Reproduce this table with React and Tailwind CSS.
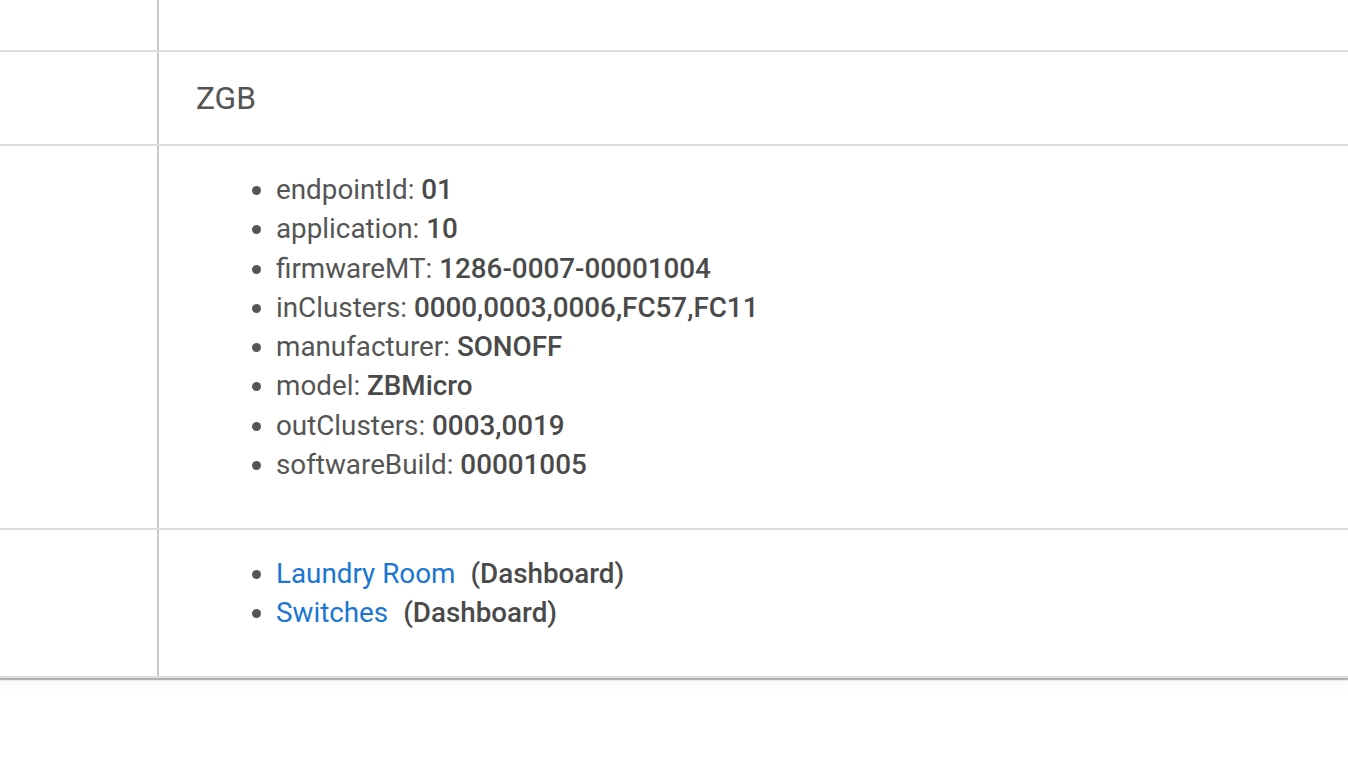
import React from "react";

const attributes = [
  ["endpointId", "01"],
  ["application", "10"],
  ["firmwareMT", "1286-0007-00001004"],
  ["inClusters", "0000,0003,0006,FC57,FC11"],
  ["manufacturer", "SONOFF"],
  ["model", "ZBMicro"],
  ["outClusters", "0003,0019"],
  ["softwareBuild", "00001005"],
];

const dashboards = ["Laundry Room", "Switches"];

const Row = ({ className = "", children }) => (
  <div className={`flex border-b-2 border-[#dcdcdc] ${className}`}>
    <div className="w-[159px] shrink-0 border-r-2 border-[#c8c8c8]"></div>
    <div className="flex-1 pl-[37px]">{children}</div>
  </div>
);

const App = () => {
  return (
    <div
      className="h-[776px] w-full bg-white text-[#555]"
      style={{ fontFamily: "Roboto, 'Liberation Sans', sans-serif" }}
    >
      <div className="bg-white shadow-[0_2px_1px_rgba(0,0,0,0.28),0_4px_12px_rgba(0,0,0,0.06)]">
        {/* top row, cut off */}
        <Row className="h-[52px]"></Row>

        {/* type */}
        <Row className="h-[94px]">
          <div className="flex h-full items-center pt-[2px] text-[31.7px] leading-none">
            ZGB
          </div>
        </Row>

        {/* data */}
        <Row className="h-[384px]">
          <ul className="list-disc pl-[80px] pt-[24px] text-[27.8px] leading-[39.25px]">
            {attributes.map(([key, value]) => (
              <li key={key}>
                {key}: <b className="font-medium text-[#4a4a4a]">{value}</b>
              </li>
            ))}
          </ul>
        </Row>

        {/* in use by */}
        <Row className="h-[148px]">
          <ul className="list-disc pl-[80px] pt-[24px] text-[27.8px] leading-[39.25px]">
            {dashboards.map((name) => (
              <li key={name}>
                <a href="#" className="text-[#1976d2]">
                  {name}
                </a>
                <b className="ml-[15px] font-medium text-[#4a4a4a]">
                  (Dashboard)
                </b>
              </li>
            ))}
          </ul>
        </Row>
      </div>
    </div>
  );
};

export default App;
